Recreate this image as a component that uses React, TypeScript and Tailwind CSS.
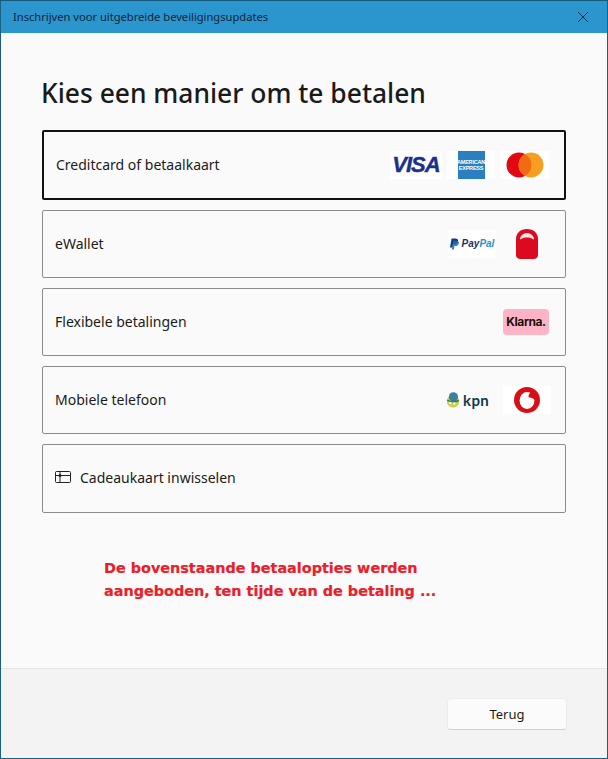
import React from "react";

const seg = "font-['Noto_Sans','Open_Sans',sans-serif]";

function Tile({ w = "w-[50px]", children }: { w?: string; children: React.ReactNode }) {
  return <div className={`${w} h-[28px] bg-white flex items-center justify-center`}>{children}</div>;
}

function Visa() {
  return (
    <Tile w="w-[52px]">
      <span className="font-['Liberation_Sans',sans-serif] font-bold italic text-[22px] leading-none tracking-[-1px] text-[#1a2f8f] [-webkit-text-stroke:0.4px_#1a2f8f]">VISA</span>
    </Tile>
  );
}

function Amex() {
  return (
    <Tile w="w-[48px]">
      <div className="w-[27px] h-[28px] bg-[#2a7fbf] flex flex-col items-center justify-center">
        <span className="font-['Liberation_Sans',sans-serif] font-bold text-[5.5px] leading-[6px] text-white tracking-[-0.2px]">AMERICAN</span>
        <span className="font-['Liberation_Sans',sans-serif] font-bold text-[5.5px] leading-[6px] text-white tracking-[-0.2px]">EXPRESS</span>
      </div>
    </Tile>
  );
}

function Mastercard() {
  return (
    <Tile w="w-[49px]">
      <svg width="38" height="26" viewBox="0 0 38 26">
        <circle cx="13" cy="13" r="12.5" fill="#e30613" />
        <circle cx="25" cy="13" r="12.5" fill="#f59e1f" />
        <path d="M19 2.1a12.5 12.5 0 0 1 0 21.8a12.5 12.5 0 0 1 0-21.8z" fill="#f26a12" />
      </svg>
    </Tile>
  );
}

function PayPal() {
  return (
    <Tile w="w-[48px]">
      <div className="flex items-center gap-[3px]">
        <svg width="9" height="12" viewBox="0 0 9 11">
          <path d="M1.6 0H5.4C7.4 0 8.4 1.1 8 2.9C7.5 5 6 5.8 4.2 5.8H3L2.4 9H0L1.6 0z" fill="#123a7c" />
          <path d="M3.2 2.2H6.6C8.4 2.4 9.2 3.4 8.8 5C8.4 6.8 7 7.6 5.4 7.6H4.4L3.9 11H1.8L3.2 2.2z" fill="#1a6fb8" opacity="0.85" />
        </svg>
        <span className="font-['Liberation_Sans',sans-serif] font-bold italic text-[10px] leading-none">
          <span className="text-[#1b2f63]">Pay</span>
          <span className="text-[#2a8dc8]">Pal</span>
        </span>
      </div>
    </Tile>
  );
}

function RedLock() {
  return (
    <div className="ml-[2px] w-[48px] h-[30px] flex items-center justify-center">
      <svg width="22" height="30" viewBox="0 0 22 30">
        <path d="M0 10C0 4 4.5 0 11 0S22 4 22 10V26C22 28.5 20 30 17.5 30H4.5C2 30 0 28.5 0 26z" fill="#dc0a1e" />
        <path d="M4 10.5C4 7 7 4 11 4S18 7 18 10.5C16 9 13.5 8.4 11 8.4S6 9 4 10.5z" fill="#fbe4e6" />
      </svg>
    </div>
  );
}

function Klarna() {
  return (
    <div className="mr-[2px] w-[46px] h-[26px] rounded-[4px] bg-[#ffb3c7] flex items-center justify-center">
      <span className="font-['Inter',sans-serif] font-bold text-[12px] leading-none tracking-[-0.4px] text-[#17120f]">Klarna.</span>
    </div>
  );
}

function Kpn() {
  return (
    <div className="flex items-center gap-[2px] mr-[9px]">
      <svg width="16" height="18" viewBox="0 0 18 18">
        <circle cx="9" cy="10.5" r="7" fill="#c9cf4a" />
        <circle cx="9.5" cy="5.5" r="5.2" fill="#3f7f9e" />
        <path d="M2.5 9c3 2.5 9 3 13 .5" fill="none" stroke="#2f7d3a" strokeWidth="1.6" />
        <circle cx="6" cy="12.5" r="1.4" fill="#fff" />
        <circle cx="10.5" cy="13" r="1.4" fill="#fff" />
      </svg>
      <span className="font-['Lato',sans-serif] font-bold text-[15px] leading-none tracking-[0.3px] text-[#123a4c]">kpn</span>
    </div>
  );
}

function Vodafone() {
  return (
    <Tile w="w-[48px]">
      <svg width="26" height="26" viewBox="0 0 26 26">
        <circle cx="13" cy="13" r="13" fill="#d90f16" />
        <ellipse cx="13" cy="13.5" rx="7.4" ry="8.4" fill="#fff" />
        <path d="M20 3.6C16.5 4.4 14.6 7 14.4 10.2C16.5 10.5 19 11 21 13L22 5z" fill="#d90f16" />
      </svg>
    </Tile>
  );
}

function Row({
  label,
  h,
  selected,
  icon,
  children,
}: {
  label: string;
  h: string;
  selected?: boolean;
  icon?: React.ReactNode;
  children?: React.ReactNode;
}) {
  return (
    <div
      className={`${h} rounded-[2px] flex items-center justify-between pl-[12px] ${
        selected ? "border-2 border-[#111111] pr-[15px]" : "border border-[#8c8c8c] pr-[14px]"
      }`}
    >
      <div className="flex items-center gap-[9px] text-[14px] text-[#1b1b1b]">
        {icon}
        <span className="pb-[2px]">{label}</span>
      </div>
      <div className="flex items-center gap-[5px]">{children}</div>
    </div>
  );
}

export default function App() {
  return (
    <div className={`w-[608px] h-[759px] flex flex-col bg-[#fafafa] border border-[#1d5f80] border-t-[#14587c] ${seg}`}>
      <div className="h-[32px] shrink-0 bg-[#2b96cd] flex items-center justify-between pl-[12px] pr-[18px]">
        <span className="text-[11.15px] text-[#10233a]">Inschrijven voor uitgebreide beveiligingsupdates</span>
        <svg width="12" height="12" viewBox="0 0 12 12">
          <path d="M1 1L11 11M11 1L1 11" stroke="#12304f" strokeWidth="1" />
        </svg>
      </div>

      <div className="flex-1 flex flex-col pl-[41px] pr-[41px]">
        <h1 className="mt-[41px] h-[38px] text-[26.4px] leading-[38px] font-medium text-[#1a1a1a] -ml-[1px]">Kies een manier om te betalen</h1>
        <div className="mt-[18px] flex flex-col gap-[10px]">
          <Row label="Creditcard of betaalkaart" h="h-[70px]" selected>
            <Visa />
            <Amex />
            <Mastercard />
          </Row>
          <Row label="eWallet" h="h-[68px]">
            <PayPal />
            <RedLock />
          </Row>
          <Row label="Flexibele betalingen" h="h-[68px]">
            <Klarna />
          </Row>
          <Row label="Mobiele telefoon" h="h-[68px]">
            <Kpn />
            <Vodafone />
          </Row>
          <Row
            label="Cadeaukaart inwisselen"
            h="h-[69px]"
            icon={
              <svg width="16" height="12" viewBox="0 0 16 12" className="-mt-[3px]">
                <rect x="0.5" y="0.5" width="15" height="11" rx="1" fill="none" stroke="#222" />
                <path d="M0.5 4.5H15.5M5 0.5V11.5" stroke="#222" />
                <circle cx="5" cy="4.5" r="1.5" fill="#222" />
              </svg>
            }
          />
        </div>
        <p className="mt-[44px] ml-[62px] font-['DejaVu_Sans',sans-serif] font-bold text-[14.4px] leading-[23px] text-[#e8202a] [-webkit-text-stroke:0.2px_#e8202a]">
          De bovenstaande betaalopties werden
          <br />
          aangeboden, ten tijde van de betaling ...
        </p>
      </div>

      <div className="h-[90px] shrink-0 bg-[#f3f3f3] border-t border-[#e6e6e6] flex justify-end pt-[29px] pr-[40px]">
        <div className="w-[120px] h-[32px] pt-[2px] rounded-[4px] bg-[#fbfbfb] border border-[#ececec] border-b-[#d0d0d0] flex items-center justify-center text-[13px] text-[#1b1b1b]">
          Terug
        </div>
      </div>
    </div>
  );
}
